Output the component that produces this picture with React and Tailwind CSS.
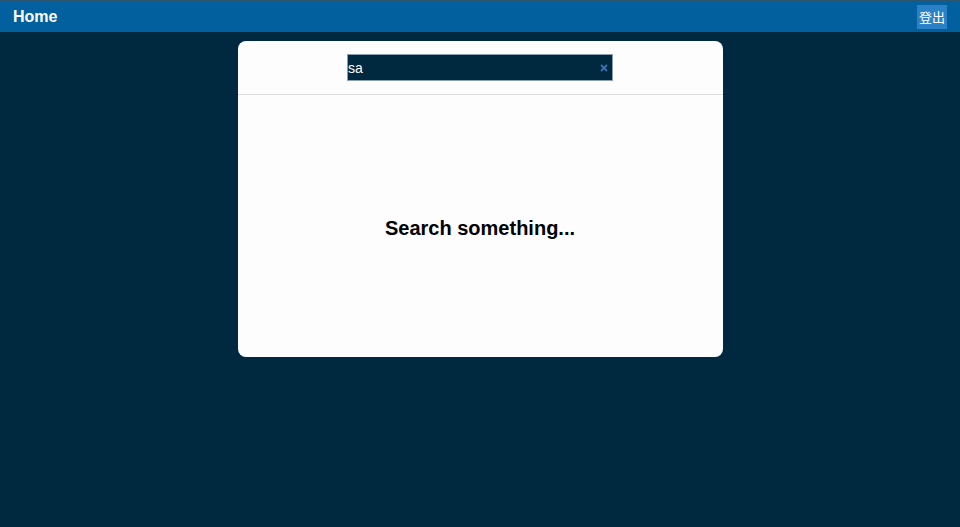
import React, { useState } from 'react';

const App = () => {
  const [query, setQuery] = useState('sa');

  return (
    <div className="min-h-screen w-full bg-[#00283f] font-['Liberation_Sans',Arial,sans-serif]">
      <header className="h-8 bg-[#02609f] border-t border-[#2f5670] flex items-center justify-between pl-[13px] pr-[13px]">
        <h1 className="text-white font-bold text-[16px] leading-none">Home</h1>
        <button className="h-6 w-[30px] bg-[#2c80c6] text-white text-[13px] font-['Noto_Sans_CJK_SC',sans-serif] leading-none flex items-center justify-center">
          登出
        </button>
      </header>

      <main className="flex justify-center pt-[9px]">
        <div className="w-[485px] h-[316px] bg-[#fdfdfd] rounded-lg flex flex-col">
          <div className="h-[54px] border-b border-[#dcdcdc] flex items-center justify-center">
            <div className="relative w-[266px] h-[27px] bg-[#00283f] border border-[#8aa0b0] flex items-center">
              <input
                value={query}
                onChange={(e) => setQuery(e.target.value)}
                className="w-full h-full bg-transparent text-white text-[14px] outline-none px-0 pr-5"
              />
              <button
                onClick={() => setQuery('')}
                className="absolute right-[4px] top-1/2 -translate-y-1/2 text-[#3c72b0]"
              >
                <svg width="8" height="8" viewBox="0 0 8 8">
                  <path d="M1 1L7 7M7 1L1 7" stroke="currentColor" strokeWidth="1.8" />
                </svg>
              </button>
            </div>
          </div>
          <div className="flex-1 flex items-center justify-center">
            <p className="text-black font-bold text-[20px] pt-1">Search something...</p>
          </div>
        </div>
      </main>
    </div>
  );
};

export default App;
